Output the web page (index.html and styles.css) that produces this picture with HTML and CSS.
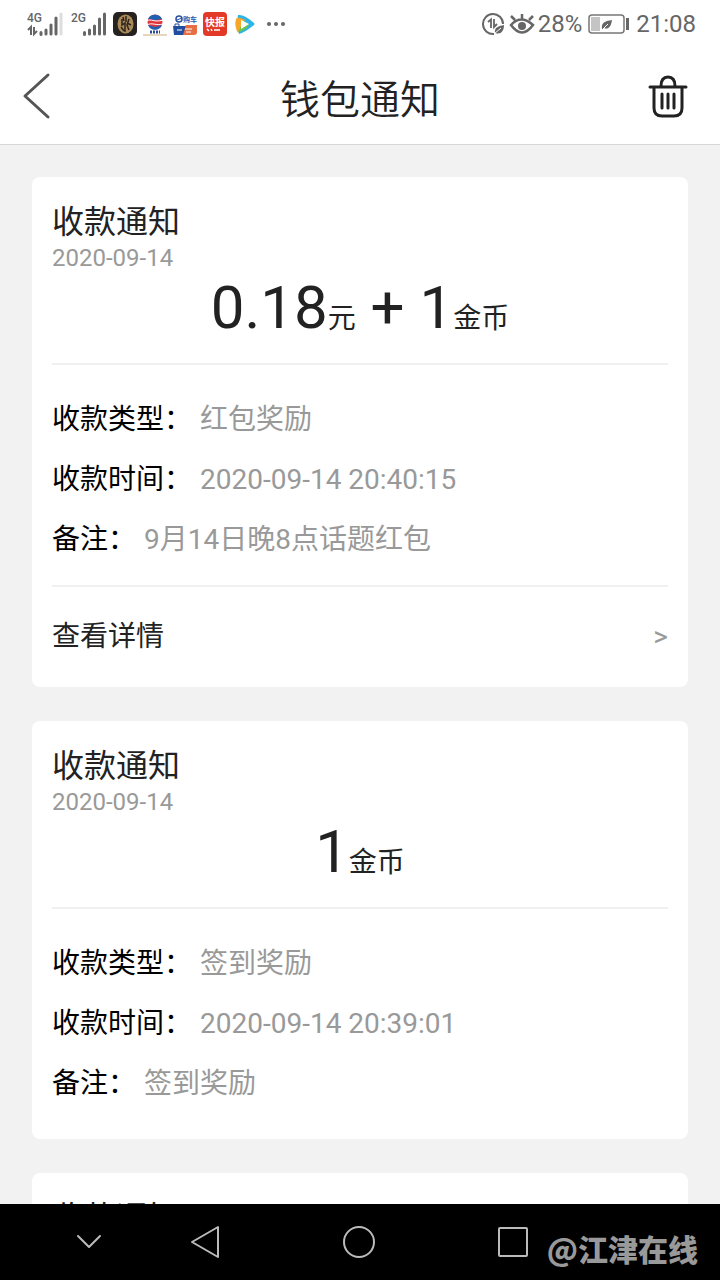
FILE: index.html
```html
<!DOCTYPE html>
<html lang="zh-CN">
<head>
    <meta charset="UTF-8">
    <meta name="viewport" content="width=device-width, initial-scale=1.0">
    <title>钱包通知</title>
    <link rel="stylesheet" href="styles.css">
</head>
<body>
    <div class="status-bar">
        <div class="status-left">
            <svg class="signal" width="36" height="28" viewBox="0 0 36 28">
                <text class="signal-text" x="0" y="12">4G</text>
                <path class="signal-arrows" d="M1 20l3-3v8M7 17v7l3-3"/>
                <path class="signal-bars" d="M14 22.500v2M19 20v4M24 15v9M29 8v16"/>
                <path class="signal-bars signal-off" d="M34 4v20"/>
            </svg>
            <svg class="signal" width="36" height="28" viewBox="0 0 36 28">
                <text class="signal-text" x="0" y="12">2G</text>
                <path class="signal-bars" d="M13.500 22.500v2M18.500 20v4M23.500 16v8M28.500 9v15M33.500 4v20"/>
            </svg>
            <svg width="24" height="24" viewBox="0 0 24 24">
                <rect width="24" height="24" rx="5" fill="#26221f"/>
                <ellipse cx="12.500" cy="12" rx="8" ry="9.500" fill="#a98a58"/>
                <path d="M13 4v6M9 7v6l3-2v9M16 7l-2 6 2 5M8 15l3 4M14 11l4 2M10 5l1 4" fill="none" stroke="#2d251d" stroke-width="1.500"/>
            </svg>
            <svg width="24" height="24" viewBox="0 0 24 24">
                <circle cx="12" cy="10" r="7.500" fill="#e2343b"/>
                <path d="M5 7a8 8 0 0 1 14 0l-7 1zM5 13l7 2 7-2a7.500 7.500 0 0 1-14 0z" fill="#1f62b4"/>
                <path d="M4 9c4-3 7 2 16-1M4 13c5-3 9 1 16-1" fill="none" stroke="#fff" stroke-width="1"/>
                <path d="M7 20h10" stroke="#254a98" stroke-width="3" stroke-dasharray="2 1"/>
                <path d="M0 23h24" stroke="#e8d5c0" stroke-width="2"/>
            </svg>
            <svg width="24" height="24" viewBox="0 0 24 24">
                <circle cx="6" cy="7" r="3" fill="none" stroke="#28509f" stroke-width="1.500"/>
                <path d="M4 8l5-2" stroke="#28509f" stroke-width="1"/>
                <text class="tiny-text" x="10" y="10" fill="#315baf">购车</text>
                <path d="M0 14h14l-3 9H1z" fill="#224e9f"/>
                <path d="M13 13h11v7q0 3-3 3H10z" fill="#e66f43"/>
                <path d="M2 14v-2h4v2" fill="none" stroke="#224e9f"/>
                <path d="M4 18h5M12 17h7M13 20h5" stroke="#fff"/>
            </svg>
            <svg width="24" height="24" viewBox="0 0 24 24">
                <rect width="24" height="24" rx="4" fill="#e23a27"/>
                <text class="news-text" x="2" y="14">快报</text>
                <path d="M4 17l2 2M8 17l1 2M11 18h6" stroke="#fff" stroke-width="1.500"/>
            </svg>
            <svg width="24" height="24" viewBox="0 0 24 24">
                <path d="M5 3q6-1 16 8 1 1 0 2-10 8-15 9-3-9-1-19z" fill="#2bb5e8"/>
                <path d="M3 7q2-3 9 1l-7 13q-4-7-2-14z" fill="#f6a72a"/>
                <path d="M5 20q7-1 11-7l-4-4-5 7z" fill="#6fc54a"/>
                <path d="M8 8l8 4-8 5z" fill="#fff"/>
            </svg>
            <svg width="24" height="24" viewBox="0 0 24 24">
                <g fill="#666"><circle cx="6" cy="12" r="2"/><circle cx="13" cy="12" r="2"/><circle cx="20" cy="12" r="2"/></g>
            </svg>
        </div>
        <div class="status-right">
            <svg width="24" height="24" viewBox="0 0 24 24" fill="none" stroke="#666" stroke-width="2">
                <path d="M12 22A10 10 0 1 1 21 12"/>
                <path d="M6 10l3-2.500V16M12 7v8l3-3" stroke-width="1.800"/>
                <path d="M13 21c-1-6 4-7 9-8 0 6-3 10-9 8z" fill="#666" stroke="none"/>
                <path d="M12 22l7-6" stroke="#fff" stroke-width="1"/>
            </svg>
            <svg width="26" height="24" viewBox="0 0 26 24" fill="none" stroke="#666" stroke-width="2.500">
                <path d="M2 13q10-11 22 0-11 15-22 0zM2 4l4 4M13 2v5M24 4l-4 4"/>
                <circle cx="13" cy="14" r="4" fill="#666" stroke="none"/>
            </svg>
            <span>28%</span>
            <svg class="battery" width="42" height="24" viewBox="0 0 42 24">
                <rect x="1" y="3" width="35" height="18" rx="3" fill="#fff" stroke="#777" stroke-width="1.500"/>
                <path d="M3 5h9v14H3z" fill="#c4c4c4"/>
                <path d="M14 17c-1-7 4-8 10-9-1 7-4 10-8 8l-2 2z" fill="#666"/>
                <path d="M14 18l6-6" stroke="#fff" stroke-width="1"/>
                <path d="M39.500 6v12" stroke="#666" stroke-width="3"/>
            </svg>
            <span>21:08</span>
        </div>
    </div>

    <header class="header">
        <a href="#" class="back" aria-label="返回">
            <svg width="32" height="50" viewBox="0 0 32 50" fill="none" stroke="#555" stroke-width="3" stroke-linecap="round" stroke-linejoin="round">
                <path d="M28 4L5 25l23 21"/>
            </svg>
        </a>
        <h1>钱包通知</h1>
        <button class="delete" type="button" aria-label="清空">
            <svg width="40" height="44" viewBox="0 0 40 44" fill="none" stroke="#222" stroke-width="3" stroke-linecap="round">
                <path d="M2 13h36M6 14v20q0 8 8 8h12q8 0 8-8V14M13 12q0-9 7-9t7 9M14 20v14M20 20v14M26 20v14"/>
            </svg>
        </button>
    </header>

    <main class="notice-list">
        <article class="card">
            <div class="card-head">
                <h2>收款通知</h2>
                <time>2020-09-14</time>
                <p class="amount">0.18<small>元</small> + 1<small>金币</small></p>
            </div>
            <dl class="details">
                <div class="row"><dt>收款类型：</dt><dd>红包奖励</dd></div>
                <div class="row"><dt>收款时间：</dt><dd>2020-09-14 20:40:15</dd></div>
                <div class="row"><dt>备注：</dt><dd>9月14日晚8点话题红包</dd></div>
            </dl>
            <a href="#" class="more"><span>查看详情</span><span class="arrow">&gt;</span></a>
        </article>

        <article class="card">
            <div class="card-head">
                <h2>收款通知</h2>
                <time>2020-09-14</time>
                <p class="amount">1<small>金币</small></p>
            </div>
            <dl class="details details-last">
                <div class="row"><dt>收款类型：</dt><dd>签到奖励</dd></div>
                <div class="row"><dt>收款时间：</dt><dd>2020-09-14 20:39:01</dd></div>
                <div class="row"><dt>备注：</dt><dd>签到奖励</dd></div>
            </dl>
        </article>

        <article class="card">
            <div class="card-head">
                <h2>收款通知</h2>
            </div>
        </article>
    </main>

    <nav class="nav-bar">
        <button type="button" aria-label="收起">
            <svg width="36" height="36" viewBox="0 0 36 36"><path d="M7 12l11 11 11-11"/></svg>
        </button>
        <button type="button" aria-label="后退">
            <svg width="36" height="36" viewBox="0 0 36 36"><path d="M31 3v30L5 18z"/></svg>
        </button>
        <button type="button" aria-label="主页">
            <svg width="36" height="36" viewBox="0 0 36 36"><circle cx="18" cy="18" r="15"/></svg>
        </button>
        <button type="button" aria-label="最近任务">
            <svg width="36" height="36" viewBox="0 0 36 36"><rect x="4" y="4" width="28" height="28" rx="1"/></svg>
        </button>
        <span class="watermark">@江津在线</span>
    </nav>
</body>
</html>
```

FILE: styles.css
```css
*,::after,::before{
    padding: 0;
    margin: 0;
    box-sizing: border-box;
}

body{
    font-family: Roboto, "Noto Sans CJK SC", sans-serif;
    font-size: 28px;
    color: #222;
    background-color: #f2f2f2;
    height: 100vh;
    display: flex;
    flex-direction: column;
    overflow: hidden;
}

a{
    text-decoration: none;
    color: #222;
}

button{
    border: none;
    background: none;
}

svg{
    display: block;
    flex: none;
}

/* status bar */
.status-bar{
    flex: none;
    display: flex;
    justify-content: space-between;
    align-items: center;
    height: 48px;
    padding: 0 24px 0 27px;
    background-color: #fff;
    color: #666;
    font-size: 24px;
}

.status-left,
.status-right{
    display: flex;
    align-items: center;
}

.status-left{
    gap: 6px;
}

.status-right{
    gap: 3px;
}

.battery{
    margin: 0 3px;
}

.signal + .signal{
    margin-left: 2px;
}

.signal-text{
    font-size: 12px;
    font-weight: 500;
    fill: #666;
}

.signal-bars{
    stroke: #666;
    stroke-width: 3;
    stroke-linecap: round;
}

.signal-off{
    stroke: #ddd;
}

.signal-arrows{
    fill: none;
    stroke: #666;
    stroke-width: 2;
}

.tiny-text{
    font-size: 7px;
    font-weight: bold;
}

.news-text{
    font-size: 10px;
    font-weight: bold;
    fill: #fff;
}

/* title bar */
.header{
    flex: none;
    display: grid;
    grid-template-columns: 80px 1fr 80px;
    align-items: center;
    height: 97px;
    background-color: #fff;
    border-bottom: 1px solid #d8d8d8;
}

.header h1{
    padding-top: 10px;
    font-size: 40px;
    font-weight: 350;
    line-height: 56px;
    text-align: center;
}

.back{
    padding-left: 20px;
}

.delete{
    justify-self: end;
    margin-right: 32px;
}

/* notices */
.notice-list{
    flex: 1;
    min-height: 0;
    overflow: hidden;
    padding: 32px;
}

.card{
    background-color: #fff;
    border-radius: 8px;
    padding: 0 20px;
    margin-bottom: 34px;
}

.card-head{
    padding: 23px 0 19px;
    border-bottom: 2px solid #f0f0f0;
}

.card-head h2{
    font-size: 32px;
    font-weight: 400;
    line-height: 44px;
}

.card-head time{
    display: block;
    font-size: 24px;
    line-height: 28px;
    color: #999;
}

.amount{
    font-size: 60px;
    line-height: 72px;
    text-align: center;
}

.amount small{
    font-size: 28px;
    line-height: 28px;
}

.details{
    padding: 25px 0 15px;
    border-bottom: 2px solid #f0f0f0;
}

.details-last{
    padding-bottom: 25px;
    border-bottom: none;
}

.row{
    display: flex;
    gap: 8px;
    line-height: 60px;
}

.row dt{
    color: #000;
}

.row dd{
    color: #999;
}

.more{
    display: flex;
    justify-content: space-between;
    line-height: 100px;
}

.arrow{
    color: #999;
}

/* system navigation */
.nav-bar{
    flex: none;
    position: relative;
    display: grid;
    grid-template-columns: 78fr 154fr 154fr 154fr;
    align-items: center;
    height: 76px;
    padding: 0 18% 0 7%;
    background-color: #000;
}

.nav-bar button{
    display: flex;
    justify-content: center;
}

.nav-bar svg{
    fill: none;
    stroke: #bbb;
    stroke-width: 2;
    stroke-linejoin: round;
    stroke-linecap: round;
}

.watermark{
    position: absolute;
    right: 22px;
    bottom: 10px;
    font-family: "Noto Sans CJK SC", sans-serif;
    font-size: 30px;
    font-weight: 900;
    line-height: 44px;
    color: #999;
}
```
